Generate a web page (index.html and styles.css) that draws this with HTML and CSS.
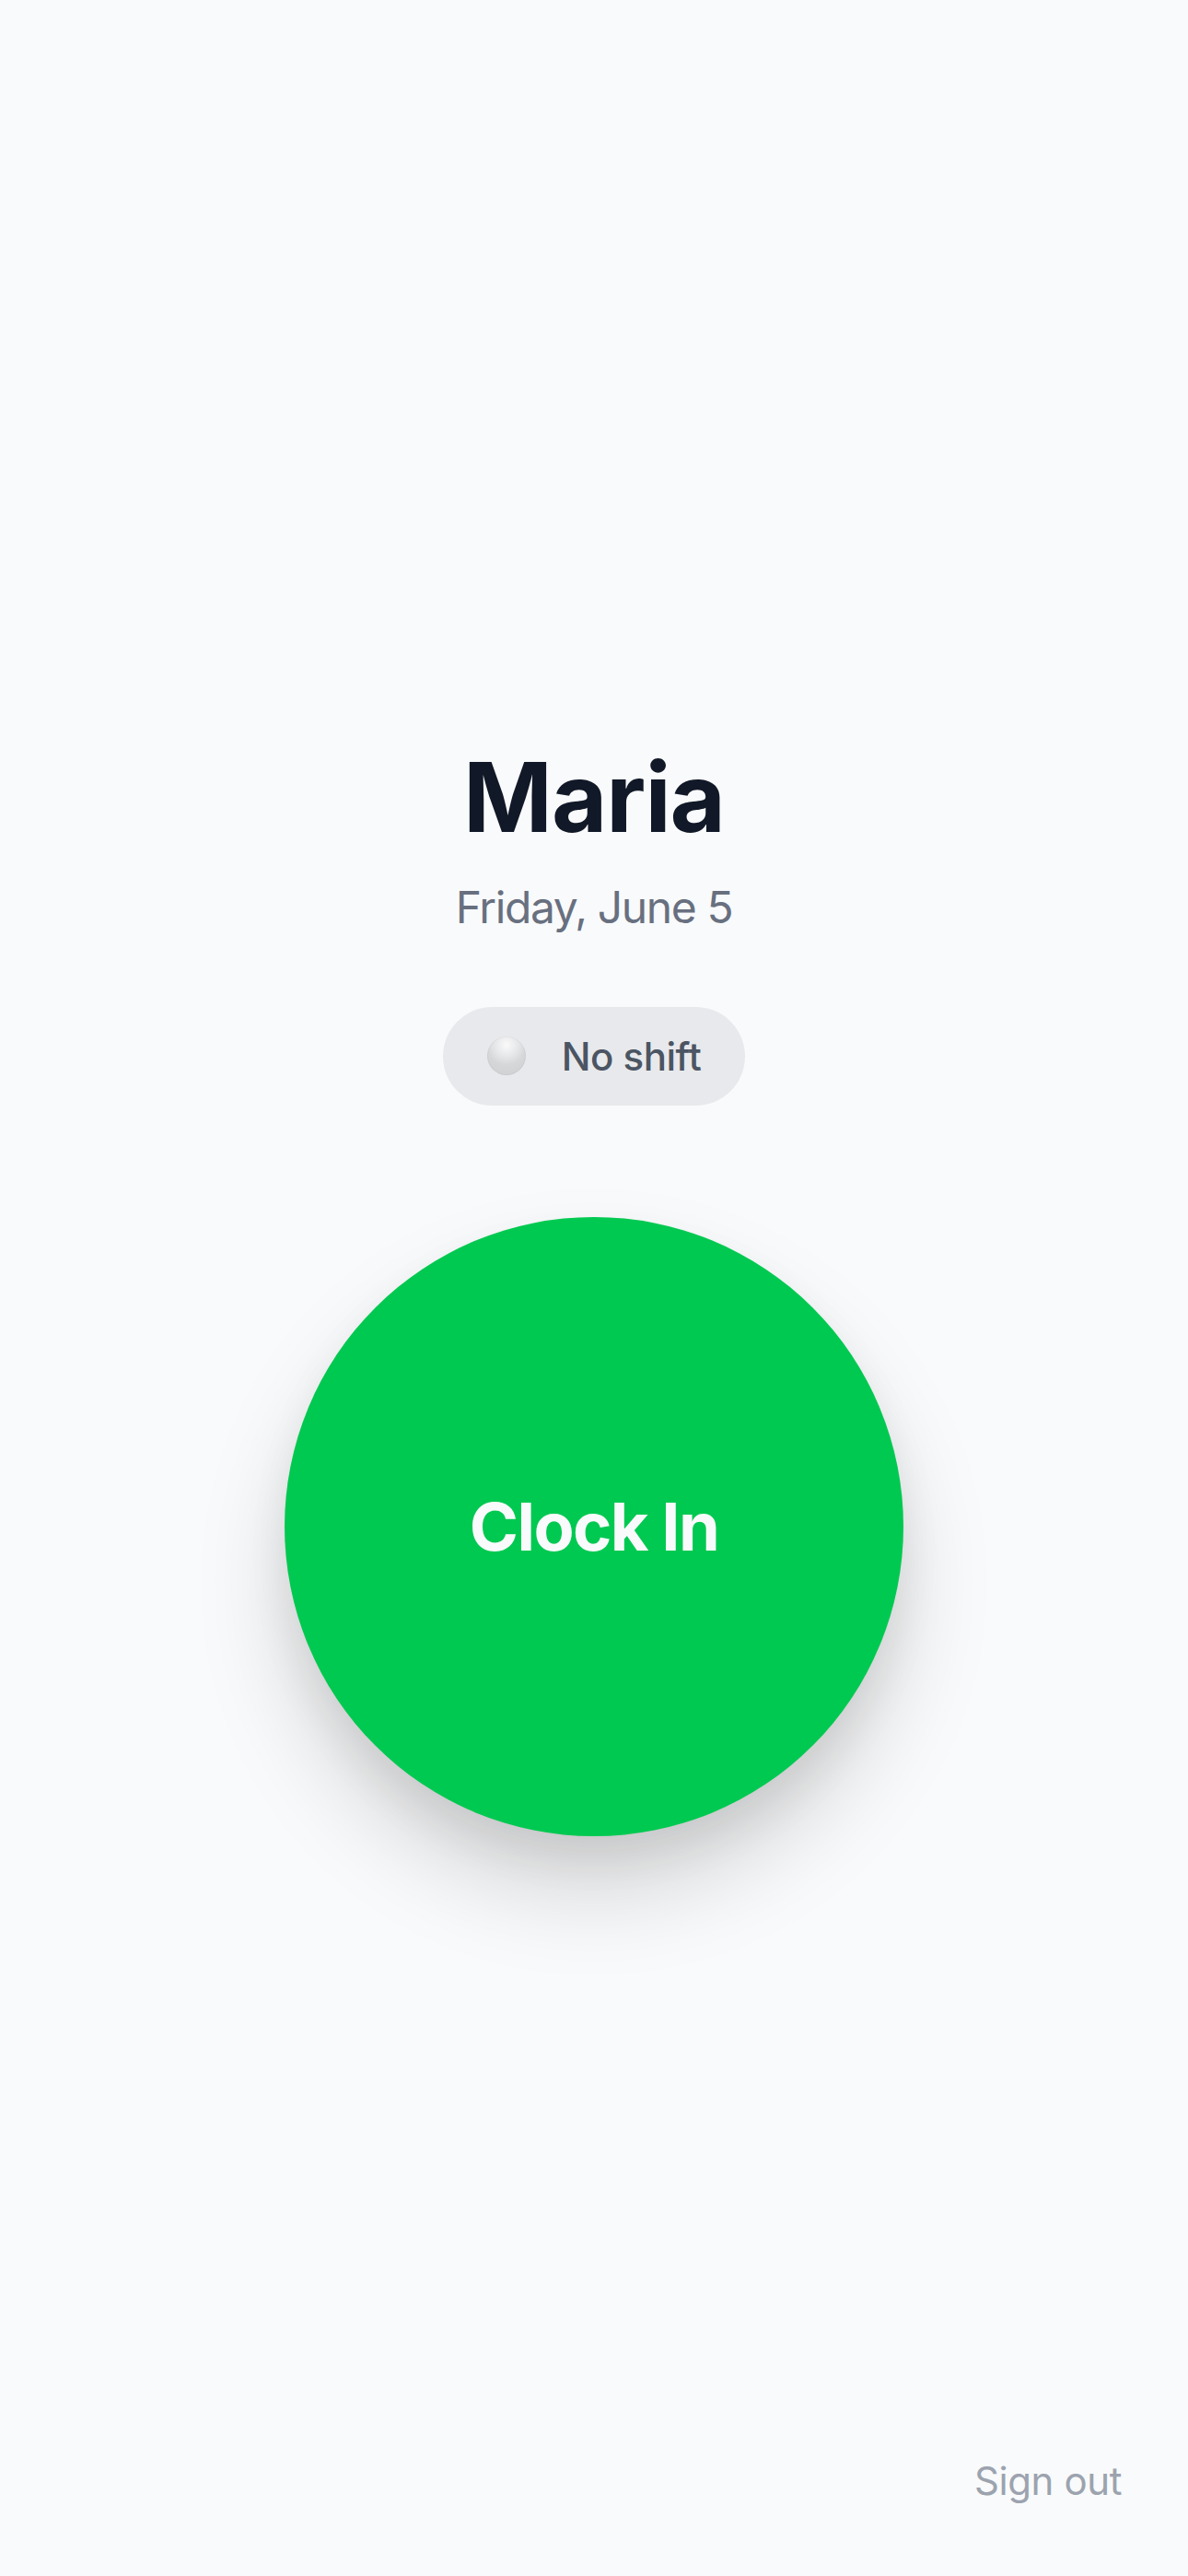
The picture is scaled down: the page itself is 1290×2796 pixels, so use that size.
FILE: index.html
```html
<!DOCTYPE html>
<html lang="en">
<head>
    <meta charset="UTF-8">
    <meta name="viewport" content="width=device-width, initial-scale=1.0">
    <title>Clock</title>
    <link rel="stylesheet" href="styles.css">
</head>
<body>
    <div class="screen">
        <main class="main">
            <h1 class="name">Maria</h1>
            <p class="date">Friday, June 5</p>

            <div class="status">
                <span class="status-dot"></span>
                <span class="status-text">No shift</span>
            </div>

            <button class="clock-btn">Clock In</button>
        </main>

        <footer class="footer">
            <a class="sign-out" href="#">Sign out</a>
        </footer>
    </div>
</body>
</html>
```

FILE: styles.css
```css
* {
    box-sizing: border-box;
}

body {
    margin: 0;
    background: #f9fafb;
    font-family: Inter, "Noto Sans", sans-serif;
}

.screen {
    min-height: 100vh;
    display: flex;
    flex-direction: column;
}

.main {
    flex: 1;
    padding-top: 135px;
    display: flex;
    flex-direction: column;
    align-items: center;
    justify-content: center;
}

.name {
    margin: 0;
    font-size: 104px;
    line-height: 1.2;
    font-weight: 700;
    letter-spacing: -1px;
    color: #111827;
}

.date {
    margin: 21px 0 0;
    font-size: 48px;
    line-height: 1.5;
    letter-spacing: -1.4px;
    color: #687080;
}

.status {
    margin-top: 72px;
    height: 107px;
    padding: 0 48px;
    display: flex;
    align-items: center;
    gap: 39px;
    background: #e8e9ec;
    border-radius: 54px;
}

.status-dot {
    width: 42px;
    height: 42px;
    border-radius: 50%;
    background: radial-gradient(circle at 50% 22%, #fafafa 0%, #e6e7e9 32%, #d6d7d9 55%, #cdcfd1 100%);
    box-shadow: inset 0 0 0 1px rgba(0, 0, 0, 0.04);
}

.status-text {
    font-size: 42px;
    font-weight: 500;
    letter-spacing: -0.5px;
    color: #4b5563;
}

.clock-btn {
    margin-top: 121px;
    width: 672px;
    height: 672px;
    border: none;
    border-radius: 50%;
    background: #00c951;
    color: #f9fafb;
    font-family: inherit;
    font-size: 72px;
    font-weight: 700;
    letter-spacing: -1.6px;
    cursor: pointer;
    box-shadow: 0 60px 100px rgba(0, 0, 0, 0.15), 0 25px 45px rgba(0, 0, 0, 0.07);
}

.footer {
    display: flex;
    justify-content: flex-end;
    padding: 0 72px 72px;
}

.sign-out {
    font-size: 42px;
    line-height: 1.5;
    letter-spacing: -0.4px;
    color: #9ca3af;
    text-decoration: none;
}
```
